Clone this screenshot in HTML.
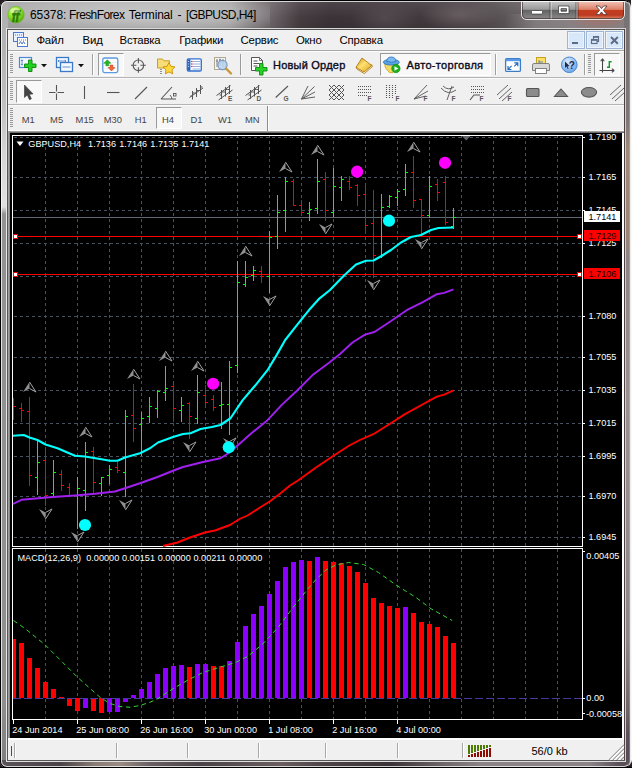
<!DOCTYPE html>
<html lang="ru"><head><meta charset="utf-8"><title>65378: FreshForex Terminal - [GBPUSD,H4]</title>
<style>
html,body{margin:0;padding:0;}
body{width:632px;height:768px;overflow:hidden;position:relative;background:#fafafa;font-family:"Liberation Sans",Arial,sans-serif;}
.abs{position:absolute;}
#win{position:absolute;left:0;top:0;width:631px;height:768px;border-radius:7px 7px 7px 7px;background:#8e8e8e;overflow:hidden;}
#win .glassL{position:absolute;left:0;top:0;width:8px;height:768px;background:linear-gradient(to bottom,#b0b0b0 0,#b2b2b2 40px,#bebebe 100px,#d4d4d4 150px,#e0e0e0 200px,#dedede 207px,#929292 214px,#8e8e8e 700px,#7e7e7e 768px);}
#win .glassR{position:absolute;left:624px;top:0;width:8px;height:768px;background:linear-gradient(to bottom,#767274 0,#7c7678 120px,#a08878 150px,#9c8476 235px,#8c8484 260px,#9a9092 400px,#8c8688 640px,#6e6468 710px,#5a4e58 735px,#564a54 768px);}
#win .glassB{position:absolute;left:0;top:760px;width:632px;height:8px;background:linear-gradient(to right,#5a5458 0,#4a4246 60px,#8a7c76 95px,#9a8c84 120px,#6a6064 150px,#4a4246 200px,#6a5e60 280px,#504649 320px,#3a3236 390px,#6a6466 440px,#8a8486 480px,#8a8486 590px,#5a4e58 620px);}
#title{position:absolute;left:0;top:0;width:632px;height:30px;background:linear-gradient(to right,#a6a6a6 0,#acacac 150px,#a4a2a3 230px,#6a6266 272px,#453c40 300px,#3a3236 330px,#40383c 420px,#4a4246 470px,#625c5e 520px,#787274 570px,#807c7e 632px);}
#title .glow{position:absolute;left:0;top:0;width:632px;height:30px;background:linear-gradient(to bottom,rgba(255,255,255,.10),rgba(255,255,255,0) 60%,rgba(0,0,0,.08));}
.tt{position:absolute;top:8px;font-size:12px;line-height:14px;color:#000;white-space:nowrap;}
#client{position:absolute;left:8px;top:30px;width:616px;height:730px;background:#f0f0f0;}
.menu{position:absolute;top:33px;font-size:11.4px;line-height:14px;color:#000;white-space:nowrap;letter-spacing:-0.2px}
.hl{position:absolute;height:1px;left:8px;width:616px;}
.vsep{position:absolute;width:1px;background:#a0a0a0;}
.grip{position:absolute;width:3px;background:repeating-linear-gradient(to bottom,#9a9a9a 0,#9a9a9a 1px,transparent 1px,transparent 2px);}
.btnp{position:absolute;background:#f8f8f8;border:1px solid #fff;border-top-color:#9a9a9a;border-left-color:#9a9a9a;box-sizing:border-box;}
.tf{position:absolute;top:114.4px;font-size:9.4px;line-height:12px;color:#444;white-space:nowrap;}
.tb{position:absolute;font-size:11px;line-height:13px;color:#0a0a1a;white-space:nowrap;letter-spacing:.22px;-webkit-text-stroke:.35px #0a0a1a}
.mdi{position:absolute;top:31px;width:18px;height:18px;box-sizing:border-box;background:#d8e7f9;border:1px solid #9db4d4;box-shadow:inset 0 0 0 1px rgba(255,255,255,.55);}
svg{overflow:visible}
</style></head><body>
<div id="win">
<div id="title"><div class="glow"></div>
<div class="abs" style="left:20px;top:2px;width:250px;height:26px;background:radial-gradient(ellipse at 50% 50%,rgba(255,255,255,.32),rgba(255,255,255,.18) 55%,rgba(255,255,255,0) 100%)"></div>
<div class="abs" style="left:505px;top:14px;width:127px;height:16px;background:linear-gradient(to right,rgba(150,146,148,0),rgba(150,146,148,.55) 25%,rgba(150,140,142,.6) 60%,rgba(140,136,138,.55))"></div>
<div class="abs" style="left:565px;top:12px;width:70px;height:18px;background:radial-gradient(ellipse at 50% 30%,rgba(200,90,70,.45),rgba(200,90,70,0) 70%)"></div>
<div class="abs" style="left:420px;top:0;width:80px;height:30px;background:radial-gradient(ellipse at 50% 50%,rgba(130,118,122,.5),rgba(130,118,122,0) 70%)"></div>
<div class="abs" style="left:350px;top:0;width:70px;height:30px;background:radial-gradient(ellipse at 50% 60%,rgba(110,100,104,.4),rgba(110,100,104,0) 70%)"></div>
</div>
<div class="glassL"></div><div class="glassR"></div><div class="glassB"></div>
</div>
<div class="abs" style="left:0;top:0;width:631px;height:768px;border-radius:7px;box-sizing:border-box;border:1px solid #000;border-right-color:#ececec"></div>
<div class="abs" style="left:1px;top:1px;width:629px;height:766px;border-radius:6px;box-sizing:border-box;border:1px solid rgba(255,255,255,.75);border-right-color:rgba(255,255,255,.2)"></div>
<svg class="abs" style="left:0;top:0" width="632" height="768"><path d="M0,0 h8 q-8,0 -8,8 z" fill="#241c20"/><path d="M632,0 h-9 q8,0 8,8 v-8 z" fill="#241c20"/><path d="M0,768 v-8 q0,8 8,8 z" fill="#241c20"/><path d="M632,768 v-8 q-1,7 -9,8 z" fill="#241c20"/><rect x="0" y="767" width="632" height="1" fill="#000"/></svg>
<div class="abs" style="left:6px;top:28px;width:620px;height:1px;background:#d8d8d8;"></div>
<div class="abs" style="left:6px;top:28px;width:1px;height:733px;background:#e8e8e8;"></div>
<div class="abs" style="left:625px;top:28px;width:1px;height:733px;background:#d4ccca;"></div>
<div class="abs" style="left:6px;top:761px;width:620px;height:1px;background:#e0e0e0;"></div>
<div class="abs" style="left:7px;top:29px;width:618px;height:1px;background:#555;"></div>
<div class="abs" style="left:7px;top:29px;width:1px;height:732px;background:#555;"></div>
<div class="abs" style="left:624px;top:29px;width:1px;height:732px;background:#4a4040;"></div>
<div class="abs" style="left:7px;top:760px;width:618px;height:1px;background:#555;"></div>
<svg class="abs" style="left:7px;top:6px" width="18" height="18" viewBox="0 0 18 18"><defs><radialGradient id="gi" cx="40%" cy="30%" r="75%"><stop offset="0" stop-color="#d4ff80"/><stop offset=".5" stop-color="#8ee02a"/><stop offset="1" stop-color="#4aa808"/></radialGradient></defs><circle cx="9" cy="8.7" r="8.2" fill="url(#gi)" stroke="#6aba18" stroke-width=".6"/><text x="8.800" y="12.600" text-anchor="middle" font-family="Liberation Serif,serif" font-style="italic" font-weight="bold" font-size="12" fill="#2a7a0a" stroke="#2a7a0a" stroke-width=".5" letter-spacing="-.3">ff</text><path d="M5,8.800 h8.500" stroke="#2a7a0a" stroke-width="1.300"/><ellipse cx="8" cy="4.500" rx="5" ry="2.500" fill="#fff" fill-opacity=".35"/></svg>
<span class="tt" style="left:29.9px;letter-spacing:-0.05px">65378:</span>
<span class="tt" style="left:69px;letter-spacing:-0.6px">FreshForex</span>
<span class="tt" style="left:128.8px;letter-spacing:-0.2px">Terminal</span>
<span class="tt" style="left:177.4px;letter-spacing:0px">-</span>
<span class="tt" style="left:186px;letter-spacing:-0.58px">[GBPUSD,H4]</span>
<svg class="abs" style="left:520px;top:0" width="106" height="22" viewBox="0 0 106 22">
<defs><linearGradient id="gb" x1="0" y1="0" x2="0" y2="1"><stop offset="0" stop-color="#c8c8c8"/><stop offset=".45" stop-color="#9a9a9a"/><stop offset=".5" stop-color="#646464"/><stop offset="1" stop-color="#8c8a8a"/></linearGradient>
<linearGradient id="gr" x1="0" y1="0" x2="0" y2="1"><stop offset="0" stop-color="#f0beb0"/><stop offset=".45" stop-color="#dc8068"/><stop offset=".5" stop-color="#c43c1e"/><stop offset=".8" stop-color="#bc3c22"/><stop offset="1" stop-color="#dc8060"/></linearGradient></defs>
<path d="M1.500,1 V14 Q1.500,19.500 7,19.500 H99 Q104.500,19.500 104.500,14 V1 Z" fill="url(#gb)" stroke="#f0f0f0" stroke-width="1" stroke-opacity=".9"/>
<path d="M57.500,2 H103.500 V14 Q103.500,18.500 99,18.500 H57.500 Z" fill="url(#gr)"/>
<path d="M2.500,2 V14 Q2.500,18.500 7,18.500 H99 Q103.500,18.500 103.500,14 V2" fill="none" stroke="#2a1a1a" stroke-width="1" stroke-opacity=".55"/>
<path d="M31,2 V18.500 M57,2 V18.500" stroke="#f0f0f0" stroke-opacity=".8"/><path d="M30,2 V18.500 M56,2 V18.500 M58,2 V18.500" stroke="#2a1a1a" stroke-opacity=".5"/>
<path d="M2,1.500 H104" stroke="#fff" stroke-opacity=".85"/>
<rect x="11.5" y="10.5" width="11" height="3.6" rx=".8" fill="#fff" stroke="#444" stroke-width=".8"/>
<path d="M38.5,6 H49 V13.6 H38.5 Z M41,8.6 V11.2 H46.5 V8.6 Z" fill="#fff" fill-rule="evenodd" stroke="#444" stroke-width=".8"/>
<path d="M76,6 L79.4,6 L81.5,8.6 L83.6,6 L87,6 L83.4,10.3 L87,14.6 L83.6,14.6 L81.5,12 L79.4,14.6 L76,14.6 L79.6,10.3 Z" fill="#fff" stroke="#503030" stroke-width=".8"/>
</svg>
<div class="abs" style="left:7px;top:0px;width:618px;height:1px;background:#000;"></div>
<div class="abs" style="left:8px;top:30px;width:616px;height:20px;background:#f0f0f0;"></div>
<div class="abs" style="left:8px;top:50px;width:616px;height:1px;background:#a9a9a9;"></div>
<svg class="abs" style="left:13px;top:32px" width="16" height="16" viewBox="0 0 16 16"><rect x=".5" y=".5" width="10" height="9" fill="#eaf2ff" stroke="#4a7ad0"/><rect x="4.5" y="5.5" width="10" height="9" fill="#fff" stroke="#4a7ad0"/><path d="M2,3 h7 M6,8 h7" stroke="#4a7ad0" stroke-dasharray="1 1"/><path d="M6,12 l1.5,-2.5 1.5,2.5 1.5,-2.5 1.5,2.5" fill="none" stroke="#3a6ac0" stroke-width=".9"/></svg>
<span class="menu" style="left:36.400000000000006px">Файл</span>
<span class="menu" style="left:82.60000000000001px">Вид</span>
<span class="menu" style="left:119.5px">Вставка</span>
<span class="menu" style="left:179.29999999999998px">Графики</span>
<span class="menu" style="left:240.5px">Сервис</span>
<span class="menu" style="left:295.9px">Окно</span>
<span class="menu" style="left:339.5px">Справка</span>
<div class="mdi" style="left:567px"></div>
<div class="mdi" style="left:586px"></div>
<div class="mdi" style="left:605px"></div>
<svg class="abs" style="left:562px;top:26px" width="64" height="28" viewBox="562 26 64 28"><rect x="572" y="42" width="6" height="2" fill="#5c6c84"/>
<path d="M593.500,40 v-3 h5 v4.500 h-1.500" fill="none" stroke="#5c6c84" stroke-width="1.100"/><rect x="593" y="36" width="6" height="1.600" fill="#5c6c84"/>
<rect x="591.500" y="39.500" width="5.500" height="4" fill="none" stroke="#5c6c84" stroke-width="1.100"/><rect x="591" y="39" width="6.500" height="1.800" fill="#5c6c84"/>
<path d="M611,37 l6.800,6.800 M617.800,37 l-6.800,6.800" stroke="#5c6c84" stroke-width="2"/></svg>
<div class="abs" style="left:8px;top:51px;width:616px;height:26px;background:#f0f0f0;"></div>
<div class="abs" style="left:8px;top:51px;width:616px;height:1px;background:#fcfcfc;"></div>
<div class="abs" style="left:8px;top:77px;width:616px;height:1px;background:#b4b4b4;"></div>
<div class="abs" style="left:8px;top:78px;width:616px;height:1px;background:#fafafa;"></div>
<div class="abs" style="left:8px;top:79px;width:616px;height:25px;background:#f0f0f0;"></div>
<div class="abs" style="left:8px;top:104px;width:616px;height:1px;background:#b4b4b4;"></div>
<div class="abs" style="left:8px;top:105px;width:616px;height:1px;background:#fafafa;"></div>
<div class="abs" style="left:8px;top:106px;width:616px;height:24px;background:#f0f0f0;"></div>
<div class="abs" style="left:8px;top:130px;width:616px;height:1px;background:#fff;"></div>
<div class="abs" style="left:8px;top:131px;width:616px;height:1px;background:#a0a0a0;"></div>
<div class="abs" style="left:8px;top:132px;width:616px;height:1px;background:#6e6e6e;"></div>
<div class="abs" style="left:8px;top:131px;width:1px;height:608px;background:#a0a0a0;"></div>
<div class="abs" style="left:9px;top:132px;width:1px;height:607px;background:#8a8a8a;"></div>
<div class="abs" style="left:622px;top:133px;width:2px;height:606px;background:#fff;"></div>
<div class="grip" style="left:10px;top:54px;height:20px"></div>
<div class="grip" style="left:10px;top:81px;height:20px"></div>
<div class="grip" style="left:10px;top:108px;height:20px"></div>
<div class="grip" style="left:588px;top:54px;height:20px"></div>
<svg class="abs" style="left:18px;top:56px" width="30" height="18" viewBox="0 0 30 18">
<rect x="1.500" y="1.500" width="12" height="10" fill="#f4f8ff" stroke="#5088d8" stroke-width="1.200"/><path d="M4,4 v5 M3,5 l1,-1.2 1,1.2 M3,8 l1,1.2 1,-1.2" stroke="#3c78c8" fill="none" stroke-width=".8"/>
<path d="M10.500,4 h3.500 v4 h4 v3.500 h-4 v4 h-3.500 v-4 h-4 v-3.500 h4 z" fill="#22d022" stroke="#0a8a0a" stroke-width=".9"/>
<path d="M23,8 h6 l-3,3.200 z" fill="#111"/></svg>
<svg class="abs" style="left:55px;top:56px" width="30" height="18" viewBox="0 0 30 18">
<rect x="1.5" y="1.5" width="12" height="10" fill="#f4f8ff" stroke="#3c78c8" stroke-width="1.3"/>
<rect x="5.5" y="6.5" width="12" height="9" fill="#f4f8ff" stroke="#3c78c8" stroke-width="1.3"/>
<path d="M3,5 h8 M3,5 l1.2,-1 M3,5 l1.2,1 M11,5 l-1.2,-1 M11,5 l-1.2,1 M7.5,11 h8" stroke="#3c78c8" stroke-width=".8" fill="none"/>
<path d="M23,8 h6 l-3,3.2 z" fill="#111"/></svg>
<div class="abs" style="left:92px;top:54px;width:1px;height:21px;background:#a0a0a0;"></div>
<div class="abs" style="left:93px;top:54px;width:1px;height:21px;background:#fff;"></div>
<div class="btnp" style="left:98px;top:53px;width:26px;height:23px"></div>
<svg class="abs" style="left:101px;top:56px" width="19" height="19" viewBox="101 56 19 19">
<rect x="102.800" y="58" width="15" height="14.600" rx="1.800" fill="#fff" stroke="#5a9ae0" stroke-width="1.300"/><path d="M104,62.500 h12.500 M104,65.500 h12.500 M104,68.500 h12.500" stroke="#e4ecf6" stroke-width=".8"/>
<path d="M107.300,59.800 l3.500,3.500 h-2.100 v2.500 h-2.800 v-2.500 h-2.100 z" fill="#22b822" stroke="#0a8a0a" stroke-width=".5"/>
<path d="M111.500,71 l-3.500,-3.500 h2.100 v-2.500 h2.800 v2.500 h2.100 z" fill="#f06838" stroke="#c03810" stroke-width=".5"/></svg>
<svg class="abs" style="left:130px;top:57px" width="18" height="18" viewBox="130 57 18 18"><circle cx="138.400" cy="65.300" r="5.300" fill="none" stroke="#5a5a5a" stroke-width="1.150"/><path d="M138.400,58 v5.300 M138.400,67.300 v5.500 M131,65.300 h5.400 M140.400,65.300 h5.500" stroke="#5a5a5a" stroke-width="1.100"/></svg>
<svg class="abs" style="left:156px;top:56px" width="20" height="20" viewBox="0 0 20 20">
<path d="M1.5,3 h5 l1.5,1.8 h5.5 v7.2 h-12 z" fill="#f8dc78" stroke="#c8a020" stroke-width="1"/><path d="M5,13 v5" stroke="#333" stroke-dasharray="1 1"/>
<path d="M13,6.5 l1.9,3.8 4.1,.6 -3,2.9 .7,4.1 -3.7,-2 -3.7,2 .7,-4.1 -3,-2.9 4.1,-.6 z" fill="#ffd83a" stroke="#c89010" stroke-width=".9"/></svg>
<svg class="abs" style="left:185px;top:57px" width="18" height="16" viewBox="185 57 18 16">
<rect x="187.300" y="58.800" width="14" height="12.200" rx="1.300" fill="#fff" stroke="#3070d0" stroke-width="1.300"/><rect x="187.800" y="59.300" width="2.600" height="11.200" fill="#2a62c0"/>
<path d="M192.500,61.500 h8 M192.500,64 h8 M192.500,66.500 h8 M192.500,69 h8" stroke="#7a9ad8" stroke-width=".8"/><circle cx="191.800" cy="61.500" r=".75" fill="#d02020"/><circle cx="191.800" cy="64" r=".75" fill="#d02020"/><circle cx="191.800" cy="66.500" r=".75" fill="#d02020"/><path d="M188.600,61 v1 M188.600,63.500 v1 M188.600,66 v1" stroke="#e8f0ff" stroke-width=".8"/></svg>
<svg class="abs" style="left:213px;top:56px" width="20" height="20" viewBox="0 0 20 20">
<rect x="1.5" y="1.5" width="11" height="12" fill="#f4f4f0" stroke="#b0a890"/><path d="M4,3 v8 M7,2.5 v7 M10,3 v8 M3,5 h2 M6,4 h2 M9,6 h2" stroke="#667" stroke-width=".8"/>
<circle cx="9.5" cy="9" r="4.6" fill="#b8d4f0" fill-opacity=".85" stroke="#7a9ac0" stroke-width="1.2"/><path d="M13,12.5 l5,5" stroke="#c89838" stroke-width="2.4" stroke-linecap="round"/></svg>
<div class="abs" style="left:240px;top:54px;width:1px;height:21px;background:#9a9a9a;"></div>
<div class="abs" style="left:241px;top:54px;width:1px;height:21px;background:#f8f8f8;"></div>
<svg class="abs" style="left:250px;top:56px" width="20" height="20" viewBox="0 0 20 20">
<path d="M1.5,1.5 h8 l3,3 v10 h-11 z" fill="#fff" stroke="#555" stroke-width="1"/><path d="M9.5,1.5 v3 h3" fill="none" stroke="#555" stroke-width=".8"/><path d="M3.5,5 h4 M3.5,7.5 h6 M3.5,10 h4" stroke="#555" stroke-width="1"/>
<path d="M9.500,7.500 h3.500 v4 h4 v3.500 h-4 v4 h-3.500 v-4 h-4 v-3.500 h4 z" fill="#28d028" stroke="#0a8a0a" stroke-width=".9"/></svg>
<span class="tb" style="left:273px;top:59px">Новый Ордер</span>
<svg class="abs" style="left:354px;top:56px" width="20" height="19" viewBox="354 56 20 19"><defs><linearGradient id="gbk" x1="0" y1="0" x2="1" y2="1"><stop offset="0" stop-color="#c89018"/><stop offset=".45" stop-color="#ffe070"/><stop offset="1" stop-color="#d8a020"/></linearGradient></defs>
<path d="M356,67.300 l1.200,2 7.200,4.300 8,-7 -.5,-1.800 z" fill="#f8f0d0" stroke="#a87410" stroke-width=".8"/>
<path d="M362,58 l9.800,7.600 -7.800,6.400 -8,-4.700 z" fill="url(#gbk)" stroke="#b07c10" stroke-width=".9" stroke-linejoin="round"/></svg>
<div class="btnp" style="left:380px;top:53px;width:111px;height:23px;background:#f8f8f8"></div>
<svg class="abs" style="left:382px;top:55px" width="20" height="20" viewBox="382 55 20 20">
<path d="M384.500,63 h13.500 l-1,5 -4,4.600 h-3.500 l-4,-4.600 z" fill="#f6d860" stroke="#c8a020" stroke-width=".8"/>
<ellipse cx="391.300" cy="62.200" rx="8" ry="2.900" fill="#5aa4e4" stroke="#2a70b8" stroke-width=".8"/><path d="M386.800,61.500 q0,-4.500 4.500,-4.500 q4.500,0 4.500,4.500 q-4.500,1.500 -9,0 z" fill="#78baf0" stroke="#2a70b8" stroke-width=".8"/>
<circle cx="395.900" cy="68.500" r="4.200" fill="#1eb01e" stroke="#0a8a0a" stroke-width=".6"/><path d="M394.500,66.200 l3.800,2.300 -3.800,2.300 z" fill="#fff"/></svg>
<span class="tb" style="left:406.6px;top:59px;letter-spacing:.32px">Авто-торговля</span>
<div class="abs" style="left:495px;top:54px;width:1px;height:21px;background:#a0a0a0;"></div>
<div class="abs" style="left:496px;top:54px;width:1px;height:21px;background:#fff;"></div>
<svg class="abs" style="left:504px;top:57px" width="18" height="16" viewBox="504 57 18 16">
<rect x="505.600" y="58.600" width="14.800" height="12.800" rx="1.200" fill="#fff" stroke="#3a7cc8" stroke-width="1.300"/><rect x="506" y="59" width="14" height="2.200" fill="#5a9ae4"/>
<path d="M514.300,62.800 h3.500 v3.500 M517.800,62.800 l-3.600,3.600 M511.500,69.500 h-3.500 v-3.500 M508,69.500 l3.600,-3.600" fill="none" stroke="#2a6cc0" stroke-width="1.200"/></svg>
<svg class="abs" style="left:531px;top:56px" width="20" height="19" viewBox="0 0 20 19">
<rect x="5.5" y="1.5" width="9" height="8" fill="#ffe060" stroke="#c8a020"/><path d="M8,4 v4 M8,6 h4" stroke="#4a7ac8" stroke-width=".9"/>
<path d="M1.5,9 q0,-1.5 1.5,-1.5 h14 q1.5,0 1.5,1.5 v5.5 h-17 z" fill="#d8d8d8" stroke="#777" stroke-width=".9"/><rect x="4.5" y="12.5" width="11" height="5" fill="#fff" stroke="#777" stroke-width=".9"/></svg>
<svg class="abs" style="left:560px;top:56px" width="19" height="19" viewBox="0 0 19 19"><defs><radialGradient id="gh" cx="40%" cy="30%" r="80%"><stop offset="0" stop-color="#dcecff"/><stop offset="1" stop-color="#5e9ce6"/></radialGradient></defs>
<circle cx="9.300" cy="8.800" r="7.800" fill="url(#gh)" stroke="#4a88d0" stroke-width="1"/><text x="11.800" y="12.600" text-anchor="middle" font-family="Liberation Sans,sans-serif" font-weight="bold" font-size="10" fill="#1a2a4a">?</text><path d="M5,5.500 v6.500 l1.600,-1.500 1.100,2.400 .9,-.4 -1.100,-2.300 2,-.2 z" fill="#1a2a4a"/></svg>
<div class="abs" style="left:584px;top:54px;width:1px;height:21px;background:#a0a0a0;"></div>
<div class="abs" style="left:585px;top:54px;width:1px;height:21px;background:#fff;"></div>
<div class="btnp" style="left:594px;top:53px;width:26px;height:23px"></div>
<svg class="abs" style="left:596px;top:56px" width="22" height="19" viewBox="596 56 22 19">
<path d="M602.500,59 v13.500 M599.500,70.500 h14.500 M602.500,58.800 l-1.800,2.400 M602.500,58.800 l1.800,2.400 M614.200,70.500 l-2.400,-1.800 M614.200,70.500 l-2.400,1.800" fill="none" stroke="#444" stroke-width="1.050"/><path d="M609.300,61 v7 M609.300,61.700 h2.300 M607,67.300 h2.300" stroke="#109828" stroke-width="1.400" fill="none"/></svg>
<div class="btnp" style="left:16px;top:80px;width:26px;height:23px"></div>
<svg class="abs" style="left:8px;top:79px" width="616" height="25" viewBox="8 79 616 25" fill="none" stroke="#555" stroke-width="1.1" font-family="Liberation Sans,sans-serif" font-size="6.5" font-weight="bold">
<path d="M24.5,85 v12.5 l2.8,-2.6 2.2,4.8 1.9,-.9 -2.2,-4.6 3.8,-.3 z" fill="#444" stroke="#333" stroke-width=".6"/>
<path d="M56.500,85 v6.500 M56.500,93.500 v6.500 M49,92.500 h6.500 M57.500,92.500 h6.500"/>
<path d="M84.500,86 v13"/><path d="M107,92.5 h12.5"/><path d="M135,99 l12,-12"/>
<path d="M161,99 h15 M161,99 l11,-12"/><path d="M170,95 a8,8 0 0 1 2,4" stroke-width=".9"/><rect x="173.5" y="93.500" width="2.500" height="2.500" stroke-width=".9"/>
<path d="M189.500,97.500 l13.500,-9.500 M192.500,91 v8.500 M196.500,88 v9 M200.500,85 v9 M190.500,96 h2 M192.500,93 h2 M194.500,93 h2 M196.500,90.500 h2 M198.500,90.500 h2 M200.500,87 h2" stroke-width="1"/>
<path d="M216.500,95.500 l14,-10 M218.500,100 l14,-10 M221.500,90 v9 M225.500,87 v9.500 M229.500,85 v9 M219.500,95 h2 M221.500,92 h2 M223.500,92 h2 M225.500,89.500 h2 M227.500,89.500 h2" stroke-width="1"/><text x="228" y="100.500" fill="#555" stroke="none">E</text>
<path d="M245.500,95.500 l14,-10 M247.500,100 l14,-10 M250.500,90 v9 M254.500,87 v9.500 M258.500,85 v9 M248.500,95 h2 M250.500,92 h2 M252.500,92 h2 M254.500,89.500 h2 M256.500,89.500 h2" stroke-width="1"/><text x="256.500" y="100.500" fill="#555" stroke="none">D</text>
<path d="M275.700,97.500 l12.300,-11.500"/><text x="283.500" y="100.500" fill="#555" stroke="none">G</text>
<path d="M301.500,99 l6.500,-13 M301.500,99 l13,-12.500 M301.500,99 l13.500,-7 M301.500,99 l13.500,-2" stroke-width=".95"/>
<path d="M329,85 l15,15 M344,85 l-15,15 M329,90 l10,10 M329,95 l5,5 M334,85 l10,10 M339,85 l5,5 M339,85 l-10,10 M334,85 l-5,5 M344,90 l-10,10 M344,95 l-5,5" stroke-width="1"/>
<path d="M358,86.500 h14 M358,89.500 h14 M358,92.500 h14 M358,95.500 h10" stroke-dasharray="1 1"/><text x="367.500" y="100.500" fill="#555" stroke="none">F</text>
<path d="M386.500,85 v13 M389.500,85 v13 M392.500,85 v13 M395.500,85 v10" stroke-dasharray="1 1"/><text x="395.500" y="100.500" fill="#555" stroke="none">F</text>
<path d="M414,99 l13,-14 M414,99 l14,-8 M414,99 l12,-3" stroke-width=".9"/><text x="423.500" y="100.500" fill="#555" stroke="none">F</text>
<path d="M447,100 l5,-14 M441,88 q7,8 15,2 M443,86 q5,5 11,1" stroke-width=".9"/><text x="451.500" y="100.500" fill="#555" stroke="none">F</text>
<path d="M471,86.500 h14 M471,89.500 h14 M471,92.500 h14" stroke-dasharray="1 1"/><path d="M470,100 l4,-5 h6"/><text x="479.500" y="100.500" fill="#555" stroke="none">F</text>
<path d="M497,95 l11,-10 M499,99 l12,-11 M502,101 l10,-9" stroke-width=".9"/><text x="507.500" y="100.500" fill="#555" stroke="none">F</text>
<rect x="526.500" y="88.500" width="12.500" height="8" rx="1" fill="#8c8c8c" stroke="#555"/>
<path d="M554.500,96.500 h13 l-6.500,-7.500 z" fill="#8c8c8c" stroke="#555"/>
<ellipse cx="589" cy="92.300" rx="7.600" ry="4.800" fill="#8c8c8c" stroke="#555"/>
<path d="M610,95 l11,-10 M612,99 l12,-11 M615,101 l10,-9" stroke-width=".9"/>
</svg>
<div class="btnp" style="left:156px;top:107px;width:26px;height:22px"></div>
<span class="tf" style="left:21.7px">M1</span>
<span class="tf" style="left:50.1px">M5</span>
<span class="tf" style="left:75.6px">M15</span>
<span class="tf" style="left:103.7px">M30</span>
<span class="tf" style="left:134.7px">H1</span>
<span class="tf" style="left:162px">H4</span>
<span class="tf" style="left:190.5px">D1</span>
<span class="tf" style="left:218px">W1</span>
<span class="tf" style="left:245px">MN</span>
<div class="abs" style="left:267px;top:106px;width:1px;height:25px;background:#8a8a8a;"></div>
<div class="abs" style="left:268px;top:106px;width:1px;height:25px;background:#fff;"></div>
<svg id="chart" width="632" height="768" viewBox="0 0 632 768" style="position:absolute;left:0;top:0" font-family="Liberation Sans, Arial, sans-serif" font-size="9.6">
<g shape-rendering="crispEdges">
<rect x="10" y="133" width="612" height="605" fill="#000" />
<line x1="45.5" y1="136" x2="45.5" y2="546" stroke="#46525f" stroke-dasharray="3 3" stroke-dashoffset="1"/>
<line x1="45.5" y1="549" x2="45.5" y2="719" stroke="#46525f" stroke-dasharray="3 3" stroke-dashoffset="0"/>
<line x1="77.5" y1="136" x2="77.5" y2="546" stroke="#46525f" stroke-dasharray="3 3" stroke-dashoffset="1"/>
<line x1="77.5" y1="549" x2="77.5" y2="719" stroke="#46525f" stroke-dasharray="3 3" stroke-dashoffset="0"/>
<line x1="109.5" y1="136" x2="109.5" y2="546" stroke="#46525f" stroke-dasharray="3 3" stroke-dashoffset="1"/>
<line x1="109.5" y1="549" x2="109.5" y2="719" stroke="#46525f" stroke-dasharray="3 3" stroke-dashoffset="0"/>
<line x1="141.5" y1="136" x2="141.5" y2="546" stroke="#46525f" stroke-dasharray="3 3" stroke-dashoffset="1"/>
<line x1="141.5" y1="549" x2="141.5" y2="719" stroke="#46525f" stroke-dasharray="3 3" stroke-dashoffset="0"/>
<line x1="173.5" y1="136" x2="173.5" y2="546" stroke="#46525f" stroke-dasharray="3 3" stroke-dashoffset="1"/>
<line x1="173.5" y1="549" x2="173.5" y2="719" stroke="#46525f" stroke-dasharray="3 3" stroke-dashoffset="0"/>
<line x1="205.5" y1="136" x2="205.5" y2="546" stroke="#46525f" stroke-dasharray="3 3" stroke-dashoffset="1"/>
<line x1="205.5" y1="549" x2="205.5" y2="719" stroke="#46525f" stroke-dasharray="3 3" stroke-dashoffset="0"/>
<line x1="237.5" y1="136" x2="237.5" y2="546" stroke="#46525f" stroke-dasharray="3 3" stroke-dashoffset="1"/>
<line x1="237.5" y1="549" x2="237.5" y2="719" stroke="#46525f" stroke-dasharray="3 3" stroke-dashoffset="0"/>
<line x1="269.5" y1="136" x2="269.5" y2="546" stroke="#46525f" stroke-dasharray="3 3" stroke-dashoffset="1"/>
<line x1="269.5" y1="549" x2="269.5" y2="719" stroke="#46525f" stroke-dasharray="3 3" stroke-dashoffset="0"/>
<line x1="301.5" y1="136" x2="301.5" y2="546" stroke="#46525f" stroke-dasharray="3 3" stroke-dashoffset="1"/>
<line x1="301.5" y1="549" x2="301.5" y2="719" stroke="#46525f" stroke-dasharray="3 3" stroke-dashoffset="0"/>
<line x1="333.5" y1="136" x2="333.5" y2="546" stroke="#46525f" stroke-dasharray="3 3" stroke-dashoffset="1"/>
<line x1="333.5" y1="549" x2="333.5" y2="719" stroke="#46525f" stroke-dasharray="3 3" stroke-dashoffset="0"/>
<line x1="365.5" y1="136" x2="365.5" y2="546" stroke="#46525f" stroke-dasharray="3 3" stroke-dashoffset="1"/>
<line x1="365.5" y1="549" x2="365.5" y2="719" stroke="#46525f" stroke-dasharray="3 3" stroke-dashoffset="0"/>
<line x1="397.5" y1="136" x2="397.5" y2="546" stroke="#46525f" stroke-dasharray="3 3" stroke-dashoffset="1"/>
<line x1="397.5" y1="549" x2="397.5" y2="719" stroke="#46525f" stroke-dasharray="3 3" stroke-dashoffset="0"/>
<line x1="429.5" y1="136" x2="429.5" y2="546" stroke="#46525f" stroke-dasharray="3 3" stroke-dashoffset="1"/>
<line x1="429.5" y1="549" x2="429.5" y2="719" stroke="#46525f" stroke-dasharray="3 3" stroke-dashoffset="0"/>
<line x1="461.5" y1="136" x2="461.5" y2="546" stroke="#46525f" stroke-dasharray="3 3" stroke-dashoffset="1"/>
<line x1="461.5" y1="549" x2="461.5" y2="719" stroke="#46525f" stroke-dasharray="3 3" stroke-dashoffset="0"/>
<line x1="493.5" y1="136" x2="493.5" y2="546" stroke="#46525f" stroke-dasharray="3 3" stroke-dashoffset="1"/>
<line x1="493.5" y1="549" x2="493.5" y2="719" stroke="#46525f" stroke-dasharray="3 3" stroke-dashoffset="0"/>
<line x1="525.5" y1="136" x2="525.5" y2="546" stroke="#46525f" stroke-dasharray="3 3" stroke-dashoffset="1"/>
<line x1="525.5" y1="549" x2="525.5" y2="719" stroke="#46525f" stroke-dasharray="3 3" stroke-dashoffset="0"/>
<line x1="557.5" y1="136" x2="557.5" y2="546" stroke="#46525f" stroke-dasharray="3 3" stroke-dashoffset="1"/>
<line x1="557.5" y1="549" x2="557.5" y2="719" stroke="#46525f" stroke-dasharray="3 3" stroke-dashoffset="0"/>
<line x1="13" y1="137.5" x2="582" y2="137.5" stroke="#46525f" stroke-dasharray="3 3" stroke-dashoffset="5"/>
<line x1="13" y1="177.5" x2="582" y2="177.5" stroke="#46525f" stroke-dasharray="3 3" stroke-dashoffset="5"/>
<line x1="13" y1="210.5" x2="582" y2="210.5" stroke="#46525f" stroke-dasharray="3 3" stroke-dashoffset="5"/>
<line x1="13" y1="243.5" x2="582" y2="243.5" stroke="#46525f" stroke-dasharray="3 3" stroke-dashoffset="5"/>
<line x1="13" y1="276.5" x2="582" y2="276.5" stroke="#46525f" stroke-dasharray="3 3" stroke-dashoffset="5"/>
<line x1="13" y1="316.5" x2="582" y2="316.5" stroke="#46525f" stroke-dasharray="3 3" stroke-dashoffset="5"/>
<line x1="13" y1="357.5" x2="582" y2="357.5" stroke="#46525f" stroke-dasharray="3 3" stroke-dashoffset="5"/>
<line x1="13" y1="390.5" x2="582" y2="390.5" stroke="#46525f" stroke-dasharray="3 3" stroke-dashoffset="5"/>
<line x1="13" y1="423.5" x2="582" y2="423.5" stroke="#46525f" stroke-dasharray="3 3" stroke-dashoffset="5"/>
<line x1="13" y1="456.5" x2="582" y2="456.5" stroke="#46525f" stroke-dasharray="3 3" stroke-dashoffset="5"/>
<line x1="13" y1="496.5" x2="582" y2="496.5" stroke="#46525f" stroke-dasharray="3 3" stroke-dashoffset="5"/>
<line x1="13" y1="537.5" x2="582" y2="537.5" stroke="#46525f" stroke-dasharray="3 3" stroke-dashoffset="5"/>
<rect x="13" y="217" width="569" height="1" fill="#5e6872" />
<rect x="12" y="135" width="1" height="585" fill="#fff" />
<rect x="12" y="135" width="571" height="1" fill="#fff" />
<rect x="582" y="135" width="1" height="585" fill="#fff" />
<rect x="12" y="546" width="571" height="1" fill="#fff" />
<rect x="12" y="547" width="571" height="1" fill="#000" />
<rect x="12" y="548" width="571" height="1" fill="#fff" />
<rect x="12" y="719" width="571" height="1" fill="#fff" />
<rect x="583" y="137" width="2" height="1" fill="#fff" />
<rect x="583" y="177" width="2" height="1" fill="#fff" />
<rect x="583" y="210" width="2" height="1" fill="#fff" />
<rect x="583" y="243" width="2" height="1" fill="#fff" />
<rect x="583" y="316" width="2" height="1" fill="#fff" />
<rect x="583" y="357" width="2" height="1" fill="#fff" />
<rect x="583" y="390" width="2" height="1" fill="#fff" />
<rect x="583" y="423" width="2" height="1" fill="#fff" />
<rect x="583" y="456" width="2" height="1" fill="#fff" />
<rect x="583" y="496" width="2" height="1" fill="#fff" />
<rect x="583" y="537" width="2" height="1" fill="#fff" />
<rect x="583" y="551" width="2" height="1" fill="#fff" />
<rect x="583" y="698" width="2" height="1" fill="#fff" />
<rect x="583" y="713" width="2" height="1" fill="#fff" />
<rect x="13" y="720" width="1" height="4" fill="#fff" />
<rect x="77" y="720" width="1" height="4" fill="#fff" />
<rect x="141" y="720" width="1" height="4" fill="#fff" />
<rect x="205" y="720" width="1" height="4" fill="#fff" />
<rect x="269" y="720" width="1" height="4" fill="#fff" />
<rect x="333" y="720" width="1" height="4" fill="#fff" />
<rect x="397" y="720" width="1" height="4" fill="#fff" />
<rect x="13" y="236" width="569" height="1" fill="#ff0000" />
<rect x="13" y="234" width="5" height="5" fill="#ff0000" />
<rect x="14" y="235" width="3" height="3" fill="#fff" />
<rect x="577" y="234" width="5" height="5" fill="#ff0000" />
<rect x="578" y="235" width="3" height="3" fill="#fff" />
<rect x="13" y="274" width="569" height="1" fill="#ff0000" />
<rect x="13" y="272" width="5" height="5" fill="#ff0000" />
<rect x="14" y="273" width="3" height="3" fill="#fff" />
<rect x="577" y="272" width="5" height="5" fill="#ff0000" />
<rect x="578" y="273" width="3" height="3" fill="#fff" />
<rect x="13" y="639" width="3" height="59" fill="#ff0000" />
<rect x="19" y="643" width="5" height="55" fill="#ff0000" />
<rect x="27" y="658" width="5" height="40" fill="#ff0000" />
<rect x="35" y="668" width="5" height="30" fill="#ff0000" />
<rect x="43" y="682" width="5" height="16" fill="#ff0000" />
<rect x="51" y="689" width="5" height="9" fill="#ff0000" />
<rect x="59" y="697" width="5" height="1" fill="#ff0000" />
<rect x="67" y="698" width="5" height="8" fill="#ff0000" />
<rect x="75" y="698" width="5" height="13" fill="#ff0000" />
<rect x="83" y="698" width="5" height="10" fill="#8c00ff" />
<rect x="91" y="698" width="5" height="13" fill="#ff0000" />
<rect x="99" y="698" width="5" height="15" fill="#ff0000" />
<rect x="107" y="698" width="5" height="14" fill="#8c00ff" />
<rect x="115" y="698" width="5" height="14" fill="#8c00ff" />
<rect x="123" y="698" width="5" height="4" fill="#8c00ff" />
<rect x="131" y="695" width="5" height="3" fill="#8c00ff" />
<rect x="139" y="689" width="5" height="9" fill="#8c00ff" />
<rect x="147" y="682" width="5" height="16" fill="#8c00ff" />
<rect x="155" y="674" width="5" height="24" fill="#8c00ff" />
<rect x="163" y="668" width="5" height="30" fill="#8c00ff" />
<rect x="171" y="666" width="5" height="32" fill="#8c00ff" />
<rect x="179" y="665" width="5" height="33" fill="#8c00ff" />
<rect x="187" y="667" width="5" height="31" fill="#ff0000" />
<rect x="195" y="664" width="5" height="34" fill="#8c00ff" />
<rect x="203" y="664" width="5" height="34" fill="#8c00ff" />
<rect x="211" y="666" width="5" height="32" fill="#ff0000" />
<rect x="219" y="666" width="5" height="32" fill="#ff0000" />
<rect x="227" y="661" width="5" height="37" fill="#8c00ff" />
<rect x="235" y="642" width="5" height="56" fill="#8c00ff" />
<rect x="243" y="626" width="5" height="72" fill="#8c00ff" />
<rect x="251" y="614" width="5" height="84" fill="#8c00ff" />
<rect x="259" y="606" width="5" height="92" fill="#8c00ff" />
<rect x="267" y="594" width="5" height="104" fill="#8c00ff" />
<rect x="275" y="581" width="5" height="117" fill="#8c00ff" />
<rect x="283" y="567" width="5" height="131" fill="#8c00ff" />
<rect x="291" y="562" width="5" height="136" fill="#8c00ff" />
<rect x="299" y="560" width="5" height="138" fill="#8c00ff" />
<rect x="307" y="561" width="5" height="137" fill="#ff0000" />
<rect x="315" y="557" width="5" height="141" fill="#8c00ff" />
<rect x="323" y="561" width="5" height="137" fill="#ff0000" />
<rect x="331" y="562" width="5" height="136" fill="#ff0000" />
<rect x="339" y="563" width="5" height="135" fill="#ff0000" />
<rect x="347" y="566" width="5" height="132" fill="#ff0000" />
<rect x="355" y="572" width="5" height="126" fill="#ff0000" />
<rect x="363" y="583" width="5" height="115" fill="#ff0000" />
<rect x="371" y="598" width="5" height="100" fill="#ff0000" />
<rect x="379" y="603" width="5" height="95" fill="#ff0000" />
<rect x="387" y="606" width="5" height="92" fill="#ff0000" />
<rect x="395" y="608" width="5" height="90" fill="#ff0000" />
<rect x="403" y="607" width="5" height="91" fill="#8c00ff" />
<rect x="411" y="613" width="5" height="85" fill="#ff0000" />
<rect x="419" y="622" width="5" height="76" fill="#ff0000" />
<rect x="427" y="624" width="5" height="74" fill="#ff0000" />
<rect x="435" y="627" width="5" height="71" fill="#ff0000" />
<rect x="443" y="636" width="5" height="62" fill="#ff0000" />
<rect x="451" y="643" width="5" height="55" fill="#ff0000" />
<line x1="13" y1="698.5" x2="582" y2="698.5" stroke="#463a9e" stroke-dasharray="8 3"/>
<rect x="13" y="398" width="1" height="22" fill="#ff0000" />
<rect x="14" y="406" width="2" height="1" fill="#ff0000" />
<rect x="21" y="403" width="1" height="19" fill="#ff0000" />
<rect x="19" y="408" width="2" height="1" fill="#ff0000" />
<rect x="22" y="410" width="2" height="1" fill="#ff0000" />
<rect x="29" y="397" width="1" height="89" fill="#ff0000" />
<rect x="27" y="411" width="2" height="1" fill="#ff0000" />
<rect x="30" y="475" width="2" height="1" fill="#ff0000" />
<rect x="37" y="439" width="1" height="56" fill="#00ff00" />
<rect x="35" y="477" width="2" height="1" fill="#00ff00" />
<rect x="38" y="462" width="2" height="1" fill="#00ff00" />
<rect x="45" y="450" width="1" height="56" fill="#ff0000" />
<rect x="43" y="460" width="2" height="1" fill="#ff0000" />
<rect x="46" y="495" width="2" height="1" fill="#ff0000" />
<rect x="53" y="460" width="1" height="36" fill="#00ff00" />
<rect x="51" y="493" width="2" height="1" fill="#00ff00" />
<rect x="54" y="472" width="2" height="1" fill="#00ff00" />
<rect x="61" y="470" width="1" height="21" fill="#ff0000" />
<rect x="59" y="474" width="2" height="1" fill="#ff0000" />
<rect x="62" y="485" width="2" height="1" fill="#ff0000" />
<rect x="69" y="483" width="1" height="14" fill="#ff0000" />
<rect x="67" y="487" width="2" height="1" fill="#ff0000" />
<rect x="70" y="495" width="2" height="1" fill="#ff0000" />
<rect x="77" y="477" width="1" height="52" fill="#00ff00" />
<rect x="75" y="495" width="2" height="1" fill="#00ff00" />
<rect x="78" y="488" width="2" height="1" fill="#00ff00" />
<rect x="85" y="442" width="1" height="69" fill="#00ff00" />
<rect x="83" y="490" width="2" height="1" fill="#00ff00" />
<rect x="86" y="452" width="2" height="1" fill="#00ff00" />
<rect x="93" y="447" width="1" height="47" fill="#ff0000" />
<rect x="91" y="451" width="2" height="1" fill="#ff0000" />
<rect x="94" y="482" width="2" height="1" fill="#ff0000" />
<rect x="101" y="477" width="1" height="19" fill="#00ff00" />
<rect x="99" y="483" width="2" height="1" fill="#00ff00" />
<rect x="102" y="477" width="2" height="1" fill="#00ff00" />
<rect x="109" y="465" width="1" height="19" fill="#00ff00" />
<rect x="107" y="475" width="2" height="1" fill="#00ff00" />
<rect x="110" y="469" width="2" height="1" fill="#00ff00" />
<rect x="117" y="462" width="1" height="11" fill="#ff0000" />
<rect x="115" y="467" width="2" height="1" fill="#ff0000" />
<rect x="118" y="470" width="2" height="1" fill="#ff0000" />
<rect x="125" y="410" width="1" height="87" fill="#00ff00" />
<rect x="123" y="472" width="2" height="1" fill="#00ff00" />
<rect x="126" y="416" width="2" height="1" fill="#00ff00" />
<rect x="133" y="384" width="1" height="58" fill="#ff0000" />
<rect x="131" y="415" width="2" height="1" fill="#ff0000" />
<rect x="134" y="428" width="2" height="1" fill="#ff0000" />
<rect x="141" y="412" width="1" height="44" fill="#00ff00" />
<rect x="139" y="424" width="2" height="1" fill="#00ff00" />
<rect x="142" y="418" width="2" height="1" fill="#00ff00" />
<rect x="149" y="397" width="1" height="26" fill="#00ff00" />
<rect x="147" y="416" width="2" height="1" fill="#00ff00" />
<rect x="150" y="406" width="2" height="1" fill="#00ff00" />
<rect x="157" y="390" width="1" height="28" fill="#00ff00" />
<rect x="155" y="408" width="2" height="1" fill="#00ff00" />
<rect x="158" y="391" width="2" height="1" fill="#00ff00" />
<rect x="165" y="366" width="1" height="35" fill="#00ff00" />
<rect x="163" y="392" width="2" height="1" fill="#00ff00" />
<rect x="166" y="388" width="2" height="1" fill="#00ff00" />
<rect x="173" y="384" width="1" height="38" fill="#ff0000" />
<rect x="171" y="386" width="2" height="1" fill="#ff0000" />
<rect x="174" y="408" width="2" height="1" fill="#ff0000" />
<rect x="181" y="397" width="1" height="25" fill="#00ff00" />
<rect x="179" y="410" width="2" height="1" fill="#00ff00" />
<rect x="182" y="405" width="2" height="1" fill="#00ff00" />
<rect x="189" y="402" width="1" height="37" fill="#ff0000" />
<rect x="187" y="403" width="2" height="1" fill="#ff0000" />
<rect x="190" y="416" width="2" height="1" fill="#ff0000" />
<rect x="197" y="375" width="1" height="49" fill="#00ff00" />
<rect x="195" y="418" width="2" height="1" fill="#00ff00" />
<rect x="198" y="392" width="2" height="1" fill="#00ff00" />
<rect x="205" y="385" width="1" height="21" fill="#ff0000" />
<rect x="203" y="395" width="2" height="1" fill="#ff0000" />
<rect x="206" y="402" width="2" height="1" fill="#ff0000" />
<rect x="213" y="395" width="1" height="16" fill="#ff0000" />
<rect x="211" y="399" width="2" height="1" fill="#ff0000" />
<rect x="214" y="407" width="2" height="1" fill="#ff0000" />
<rect x="221" y="382" width="1" height="47" fill="#00ff00" />
<rect x="219" y="405" width="2" height="1" fill="#00ff00" />
<rect x="222" y="404" width="2" height="1" fill="#00ff00" />
<rect x="229" y="361" width="1" height="74" fill="#00ff00" />
<rect x="227" y="404" width="2" height="1" fill="#00ff00" />
<rect x="230" y="367" width="2" height="1" fill="#00ff00" />
<rect x="237" y="261" width="1" height="112" fill="#00ff00" />
<rect x="235" y="365" width="2" height="1" fill="#00ff00" />
<rect x="238" y="282" width="2" height="1" fill="#00ff00" />
<rect x="245" y="261" width="1" height="26" fill="#00ff00" />
<rect x="243" y="284" width="2" height="1" fill="#00ff00" />
<rect x="246" y="277" width="2" height="1" fill="#00ff00" />
<rect x="253" y="266" width="1" height="15" fill="#00ff00" />
<rect x="251" y="275" width="2" height="1" fill="#00ff00" />
<rect x="254" y="270" width="2" height="1" fill="#00ff00" />
<rect x="261" y="266" width="1" height="17" fill="#ff0000" />
<rect x="259" y="271" width="2" height="1" fill="#ff0000" />
<rect x="262" y="276" width="2" height="1" fill="#ff0000" />
<rect x="269" y="231" width="1" height="62" fill="#00ff00" />
<rect x="267" y="276" width="2" height="1" fill="#00ff00" />
<rect x="270" y="237" width="2" height="1" fill="#00ff00" />
<rect x="277" y="195" width="1" height="54" fill="#00ff00" />
<rect x="275" y="236" width="2" height="1" fill="#00ff00" />
<rect x="278" y="212" width="2" height="1" fill="#00ff00" />
<rect x="285" y="177" width="1" height="55" fill="#00ff00" />
<rect x="283" y="210" width="2" height="1" fill="#00ff00" />
<rect x="286" y="181" width="2" height="1" fill="#00ff00" />
<rect x="293" y="179" width="1" height="27" fill="#ff0000" />
<rect x="291" y="181" width="2" height="1" fill="#ff0000" />
<rect x="294" y="205" width="2" height="1" fill="#ff0000" />
<rect x="301" y="200" width="1" height="16" fill="#ff0000" />
<rect x="299" y="205" width="2" height="1" fill="#ff0000" />
<rect x="302" y="212" width="2" height="1" fill="#ff0000" />
<rect x="309" y="202" width="1" height="19" fill="#00ff00" />
<rect x="307" y="213" width="2" height="1" fill="#00ff00" />
<rect x="310" y="209" width="2" height="1" fill="#00ff00" />
<rect x="317" y="159" width="1" height="55" fill="#00ff00" />
<rect x="315" y="208" width="2" height="1" fill="#00ff00" />
<rect x="318" y="181" width="2" height="1" fill="#00ff00" />
<rect x="325" y="172" width="1" height="49" fill="#ff0000" />
<rect x="323" y="179" width="2" height="1" fill="#ff0000" />
<rect x="326" y="210" width="2" height="1" fill="#ff0000" />
<rect x="333" y="168" width="1" height="49" fill="#00ff00" />
<rect x="331" y="212" width="2" height="1" fill="#00ff00" />
<rect x="334" y="186" width="2" height="1" fill="#00ff00" />
<rect x="341" y="176" width="1" height="25" fill="#00ff00" />
<rect x="339" y="187" width="2" height="1" fill="#00ff00" />
<rect x="342" y="179" width="2" height="1" fill="#00ff00" />
<rect x="349" y="176" width="1" height="14" fill="#ff0000" />
<rect x="347" y="181" width="2" height="1" fill="#ff0000" />
<rect x="350" y="187" width="2" height="1" fill="#ff0000" />
<rect x="357" y="184" width="1" height="22" fill="#ff0000" />
<rect x="355" y="185" width="2" height="1" fill="#ff0000" />
<rect x="358" y="195" width="2" height="1" fill="#ff0000" />
<rect x="365" y="186" width="1" height="47" fill="#ff0000" />
<rect x="363" y="194" width="2" height="1" fill="#ff0000" />
<rect x="366" y="225" width="2" height="1" fill="#ff0000" />
<rect x="373" y="190" width="1" height="88" fill="#ff0000" />
<rect x="371" y="223" width="2" height="1" fill="#ff0000" />
<rect x="374" y="255" width="2" height="1" fill="#ff0000" />
<rect x="381" y="194" width="1" height="64" fill="#00ff00" />
<rect x="379" y="256" width="2" height="1" fill="#00ff00" />
<rect x="382" y="207" width="2" height="1" fill="#00ff00" />
<rect x="389" y="195" width="1" height="13" fill="#00ff00" />
<rect x="387" y="206" width="2" height="1" fill="#00ff00" />
<rect x="390" y="196" width="2" height="1" fill="#00ff00" />
<rect x="397" y="189" width="1" height="17" fill="#00ff00" />
<rect x="395" y="197" width="2" height="1" fill="#00ff00" />
<rect x="398" y="191" width="2" height="1" fill="#00ff00" />
<rect x="405" y="164" width="1" height="32" fill="#00ff00" />
<rect x="403" y="189" width="2" height="1" fill="#00ff00" />
<rect x="406" y="172" width="2" height="1" fill="#00ff00" />
<rect x="413" y="156" width="1" height="52" fill="#ff0000" />
<rect x="411" y="172" width="2" height="1" fill="#ff0000" />
<rect x="414" y="200" width="2" height="1" fill="#ff0000" />
<rect x="421" y="199" width="1" height="37" fill="#ff0000" />
<rect x="419" y="199" width="2" height="1" fill="#ff0000" />
<rect x="422" y="215" width="2" height="1" fill="#ff0000" />
<rect x="429" y="176" width="1" height="42" fill="#00ff00" />
<rect x="427" y="215" width="2" height="1" fill="#00ff00" />
<rect x="430" y="186" width="2" height="1" fill="#00ff00" />
<rect x="437" y="179" width="1" height="22" fill="#ff0000" />
<rect x="435" y="184" width="2" height="1" fill="#ff0000" />
<rect x="438" y="192" width="2" height="1" fill="#ff0000" />
<rect x="445" y="176" width="1" height="49" fill="#ff0000" />
<rect x="443" y="182" width="2" height="1" fill="#ff0000" />
<rect x="446" y="222" width="2" height="1" fill="#ff0000" />
<rect x="453" y="208" width="1" height="21" fill="#00ff00" />
<rect x="451" y="226" width="2" height="1" fill="#00ff00" />
<rect x="454" y="217" width="2" height="1" fill="#00ff00" />
</g>
<polyline points="163,546 165,545.5 177.5,542.5 190,537.5 205,532.5 215,530.5 230,525 240,518.75 247.5,515.5 260,507.5 270,501.25 280,493.75 290,485.5 298,480.5 316,467.5 333.5,455.75 348.5,446 359.8,440 373.3,434.2 390,423.75 404.6,414.4 423.3,404 436.9,396.7 444.2,394.6 453.5,390.4" fill="none" stroke="#ff0000" stroke-width="1.9" stroke-linejoin="round"/>
<polyline points="13,504 21.5,499.8 30,499 52.8,497 75,495.5 95,493.75 115,491.5 125,488.25 140,483.25 157.5,477 173,470.75 183,467 203,462 220.5,458.25 228,453.5 234.2,448.5 250.8,433.75 267.5,420.2 282,404.6 296.7,391 313.3,374.4 330,361.9 340,354 352.5,342.5 365,334.6 374.4,332 390,321.7 406.7,310.2 423.3,301.9 436.9,294.2 444.2,292.9 453.5,289.4" fill="none" stroke="#a020f0" stroke-width="1.9" stroke-linejoin="round"/>
<polyline points="13,435.75 23.75,435 29.5,437.5 37.5,440 45.5,444.5 57.5,448.25 75,455.75 85,456.5 100,459 110,460.75 117.5,460.75 125,457.5 140,453.25 150,448.25 158,442.5 173,437 183,434 190.5,433.25 200.5,429 211.75,427 220.5,425 230.5,418.25 242.5,400.4 255,385.8 267.5,370.2 276.9,354.6 285.2,340 296.7,325.4 309.2,309.8 319.6,298.3 330,290 343.5,276 356,264.5 366,260.75 373.5,260.5 381.5,256 391,250 401,242.5 411,237 421,235 431,230 438.5,228 453.5,227.5" fill="none" stroke="#00ffff" stroke-width="2.15" stroke-linejoin="round"/>
<polyline points="13.5,620.5 25,628.5 45,644.75 62.5,662.25 77.5,677.25 100,697.25 110,703.5 120,706.5 130,707.25 140,705.5 150,702.25 158,698.5 173,688.75 188,680 203,672.5 220.5,667 235.5,662.5 248,656.25 263,643.75 278,627.5 293,607.5 308,588.75 316,579.5 326,570 336,565 348.5,562.5 363.5,564.5 378.5,572.5 396,585 416,597.5 431,608.75 452.25,620.5" fill="none" stroke="#34d434" stroke-width="1" stroke-dasharray="4.5 3.5"/>
<path d="M29.5,382 L23.0,392 L29.5,388.5 Z" fill="#909090"/>
<path d="M29.5,382 L36.0,392 L29.5,388.5" fill="none" stroke="#a4a4a4" stroke-width="1"/>
<path d="M85.5,427 L79.0,437 L85.5,433.5 Z" fill="#909090"/>
<path d="M85.5,427 L92.0,437 L85.5,433.5" fill="none" stroke="#a4a4a4" stroke-width="1"/>
<path d="M133.5,369 L127.0,379 L133.5,375.5 Z" fill="#909090"/>
<path d="M133.5,369 L140.0,379 L133.5,375.5" fill="none" stroke="#a4a4a4" stroke-width="1"/>
<path d="M165.5,351 L159.0,361 L165.5,357.5 Z" fill="#909090"/>
<path d="M165.5,351 L172.0,361 L165.5,357.5" fill="none" stroke="#a4a4a4" stroke-width="1"/>
<path d="M197.5,361 L191.0,371 L197.5,367.5 Z" fill="#909090"/>
<path d="M197.5,361 L204.0,371 L197.5,367.5" fill="none" stroke="#a4a4a4" stroke-width="1"/>
<path d="M245.5,246 L239.0,256 L245.5,252.5 Z" fill="#909090"/>
<path d="M245.5,246 L252.0,256 L245.5,252.5" fill="none" stroke="#a4a4a4" stroke-width="1"/>
<path d="M285.5,162 L279.0,172 L285.5,168.5 Z" fill="#909090"/>
<path d="M285.5,162 L292.0,172 L285.5,168.5" fill="none" stroke="#a4a4a4" stroke-width="1"/>
<path d="M317.5,145 L311.0,155 L317.5,151.5 Z" fill="#909090"/>
<path d="M317.5,145 L324.0,155 L317.5,151.5" fill="none" stroke="#a4a4a4" stroke-width="1"/>
<path d="M413.5,142 L407.0,152 L413.5,148.5 Z" fill="#909090"/>
<path d="M413.5,142 L420.0,152 L413.5,148.5" fill="none" stroke="#a4a4a4" stroke-width="1"/>
<path d="M45.5,519 L39.0,509 L45.5,512.5 Z" fill="#909090"/>
<path d="M45.5,519 L52.0,509 L45.5,512.5" fill="none" stroke="#a4a4a4" stroke-width="1"/>
<path d="M77.5,542 L71.0,532 L77.5,535.5 Z" fill="#909090"/>
<path d="M77.5,542 L84.0,532 L77.5,535.5" fill="none" stroke="#a4a4a4" stroke-width="1"/>
<path d="M125.5,510 L119.0,500 L125.5,503.5 Z" fill="#909090"/>
<path d="M125.5,510 L132.0,500 L125.5,503.5" fill="none" stroke="#a4a4a4" stroke-width="1"/>
<path d="M189.5,452 L183.0,442 L189.5,445.5 Z" fill="#909090"/>
<path d="M189.5,452 L196.0,442 L189.5,445.5" fill="none" stroke="#a4a4a4" stroke-width="1"/>
<path d="M229.5,448 L223.0,438 L229.5,441.5 Z" fill="#909090"/>
<path d="M229.5,448 L236.0,438 L229.5,441.5" fill="none" stroke="#a4a4a4" stroke-width="1"/>
<path d="M269.5,306 L263.0,296 L269.5,299.5 Z" fill="#909090"/>
<path d="M269.5,306 L276.0,296 L269.5,299.5" fill="none" stroke="#a4a4a4" stroke-width="1"/>
<path d="M325.5,234 L319.0,224 L325.5,227.5 Z" fill="#909090"/>
<path d="M325.5,234 L332.0,224 L325.5,227.5" fill="none" stroke="#a4a4a4" stroke-width="1"/>
<path d="M373.5,290 L367.0,280 L373.5,283.5 Z" fill="#909090"/>
<path d="M373.5,290 L380.0,280 L373.5,283.5" fill="none" stroke="#a4a4a4" stroke-width="1"/>
<path d="M421.5,249 L415.0,239 L421.5,242.5 Z" fill="#909090"/>
<path d="M421.5,249 L428.0,239 L421.5,242.5" fill="none" stroke="#a4a4a4" stroke-width="1"/>
<circle cx="213.1" cy="383.75" r="6.1" fill="#ff00ff"/>
<circle cx="357.1" cy="171.7" r="6.1" fill="#ff00ff"/>
<circle cx="445" cy="162.8" r="6.1" fill="#ff00ff"/>
<circle cx="85" cy="525" r="6.1" fill="#00ffff"/>
<circle cx="228.75" cy="447.3" r="6.1" fill="#00ffff"/>
<circle cx="389" cy="220.7" r="6.1" fill="#00ffff"/>
<path d="M462,136 L470.5,136 L466.2,140.5 Z" fill="#606468"/>
<g fill="#fff">
<text transform="translate(588.5 140.1) scale(.953 1)">1.7190</text>
<text transform="translate(588.5 180.1) scale(.953 1)">1.7165</text>
<text transform="translate(588.5 213.1) scale(.953 1)">1.7145</text>
<text transform="translate(588.5 246.1) scale(.953 1)">1.7125</text>
<text transform="translate(588.5 319.1) scale(.953 1)">1.7080</text>
<text transform="translate(588.5 360.1) scale(.953 1)">1.7055</text>
<text transform="translate(588.5 393.1) scale(.953 1)">1.7035</text>
<text transform="translate(588.5 426.1) scale(.953 1)">1.7015</text>
<text transform="translate(588.5 459.1) scale(.953 1)">1.6995</text>
<text transform="translate(588.5 499.1) scale(.953 1)">1.6970</text>
<text transform="translate(588.5 540.1) scale(.953 1)">1.6945</text>
</g>
<rect x="584" y="211" width="36" height="11" fill="#fff" shape-rendering="crispEdges"/>
<text transform="translate(588.5 219.9) scale(.953 1)" fill="#000">1.7141</text>
<rect x="584" y="230" width="36" height="11" fill="#ff0000" shape-rendering="crispEdges"/>
<text transform="translate(588.5 238.9) scale(.953 1)" fill="#200000">1.7129</text>
<rect x="584" y="268" width="36" height="11" fill="#ff0000" shape-rendering="crispEdges"/>
<text transform="translate(588.5 276.9) scale(.953 1)" fill="#200000">1.7106</text>
<g fill="#fff">
<path d="M16.5,141.5 L23.5,141.5 L20,146 Z"/>
<text transform="translate(28.3 147) scale(.953 1)">GBPUSD,H4</text>
<text transform="translate(88.1 147) scale(.953 1)">1.7136</text>
<text transform="translate(119.19999999999999 147) scale(.953 1)">1.7146</text>
<text transform="translate(150.3 147) scale(.953 1)">1.7135</text>
<text transform="translate(181.4 147) scale(.953 1)">1.7141</text>
<text transform="translate(17.5 561) scale(.953 1)">MACD(12,26,9)</text>
<text transform="translate(86.25 561) scale(.953 1)">0.00000</text>
<text transform="translate(122.0 561) scale(.953 1)">0.00151</text>
<text transform="translate(157.75 561) scale(.953 1)">0.00000</text>
<text transform="translate(193.5 561) scale(.953 1)">0.00211</text>
<text transform="translate(229.25 561) scale(.953 1)">0.00000</text>
<text transform="translate(586.3 558.6) scale(.953 1)">0.00405</text>
<text transform="translate(586.3 700.9) scale(.953 1)">0.00</text>
<text transform="translate(586 716.8) scale(.953 1)">-0.00058</text>
<text transform="translate(12.2 733) scale(.953 1)">24 Jun 2014</text>
<text transform="translate(76.2 733) scale(.953 1)">25 Jun 08:00</text>
<text transform="translate(140.2 733) scale(.953 1)">26 Jun 16:00</text>
<text transform="translate(204.2 733) scale(.953 1)">30 Jun 00:00</text>
<text transform="translate(268.2 733) scale(.953 1)">1 Jul 08:00</text>
<text transform="translate(332.2 733) scale(.953 1)">2 Jul 16:00</text>
<text transform="translate(396.2 733) scale(.953 1)">4 Jul 00:00</text>
</g>
</svg>
<div class="abs" style="left:8px;top:738px;width:616px;height:2px;background:#fff;"></div>
<div class="abs" style="left:8px;top:740px;width:616px;height:20px;background:#f0f0f0;"></div>
<div class="abs" style="left:11px;top:746px;width:1px;height:10px;background:#8a3030;"></div>
<div class="abs" style="left:14px;top:743px;width:1px;height:15px;background:#a8a8a8;"></div>
<div class="abs" style="left:15px;top:743px;width:1px;height:15px;background:#fff;"></div>
<div class="abs" style="left:116px;top:743px;width:1px;height:15px;background:#a8a8a8;"></div>
<div class="abs" style="left:117px;top:743px;width:1px;height:15px;background:#fff;"></div>
<div class="abs" style="left:187px;top:743px;width:1px;height:15px;background:#a8a8a8;"></div>
<div class="abs" style="left:188px;top:743px;width:1px;height:15px;background:#fff;"></div>
<div class="abs" style="left:258px;top:743px;width:1px;height:15px;background:#a8a8a8;"></div>
<div class="abs" style="left:259px;top:743px;width:1px;height:15px;background:#fff;"></div>
<div class="abs" style="left:325px;top:743px;width:1px;height:15px;background:#a8a8a8;"></div>
<div class="abs" style="left:326px;top:743px;width:1px;height:15px;background:#fff;"></div>
<div class="abs" style="left:397px;top:743px;width:1px;height:15px;background:#a8a8a8;"></div>
<div class="abs" style="left:398px;top:743px;width:1px;height:15px;background:#fff;"></div>
<div class="abs" style="left:462px;top:743px;width:1px;height:15px;background:#a8a8a8;"></div>
<div class="abs" style="left:463px;top:743px;width:1px;height:15px;background:#fff;"></div>
<svg class="abs" style="left:467px;top:744px" width="26" height="14" viewBox="0 0 26 14" shape-rendering="crispEdges"><rect x="1" y="1" width="2" height="9" fill="#4c7a02"/><rect x="1" y="11" width="2" height="2" fill="#8e0c02"/><rect x="4" y="1" width="2" height="8" fill="#4c7a02"/><rect x="4" y="10" width="2" height="3" fill="#8e0c02"/><rect x="7" y="1" width="2" height="7" fill="#4c7a02"/><rect x="7" y="9" width="2" height="4" fill="#8e0c02"/><rect x="10" y="1" width="2" height="6" fill="#4c7a02"/><rect x="10" y="8" width="2" height="5" fill="#8e0c02"/><rect x="13" y="1" width="2" height="5" fill="#4c7a02"/><rect x="13" y="7" width="2" height="6" fill="#8e0c02"/><rect x="16" y="1" width="2" height="4" fill="#4c7a02"/><rect x="16" y="6" width="2" height="7" fill="#8e0c02"/><rect x="19" y="1" width="2" height="3" fill="#4c7a02"/><rect x="19" y="5" width="2" height="8" fill="#8e0c02"/><rect x="22" y="1" width="2" height="2" fill="#4c7a02"/><rect x="22" y="4" width="2" height="9" fill="#8e0c02"/></svg>
<span class="abs" style="left:531.5px;top:744px;font-size:11px;line-height:14px;color:#000;white-space:nowrap">56/0 kb</span>
<svg class="abs" style="left:608px;top:744px" width="16" height="16" viewBox="0 0 16 16"><path d="M16,1 L1,16 M16,5 L5,16 M16,9 L9,16 M16,13 L13,16" stroke="#9a9a9a" stroke-width="1.300"/><path d="M16,2.400 L2.400,16 M16,6.400 L6.400,16 M16,10.400 L10.400,16" stroke="#fff" stroke-width="1.100"/></svg>
</body></html>
